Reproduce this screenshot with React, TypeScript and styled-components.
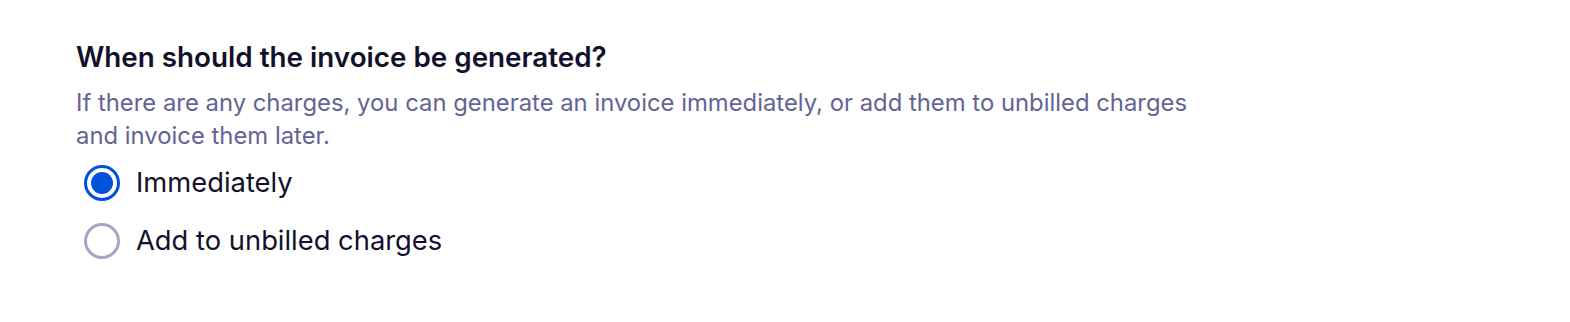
import { useState } from "react";
import styled, { createGlobalStyle } from "styled-components";

const GlobalStyle = createGlobalStyle`
  body {
    margin: 0;
    background: #ffffff;
    font-family: Inter, "Noto Sans", sans-serif;
  }
`;

const Section = styled.section`
  padding: 39px 76px;
`;

const Title = styled.h2`
  margin: 0;
  font-size: 27.8px;
  line-height: 36px;
  font-weight: 600;
  color: #12112b;
`;

const Desc = styled.p`
  margin: 11px 0 0;
  max-width: 1135px;
  font-size: 23.85px;
  line-height: 33px;
  color: #656395;
`;

const Options = styled.div`
  display: flex;
  flex-direction: column;
  gap: 22px;
  margin-top: 13px;
  padding-left: 8px;
`;

const Option = styled.label`
  display: flex;
  align-items: center;
  gap: 16px;
  cursor: pointer;
  font-size: 27.35px;
  line-height: 36px;
  color: #12112b;
`;

const Radio = styled.span<{ $checked: boolean }>`
  box-sizing: border-box;
  width: 36px;
  height: 36px;
  border-radius: 50%;
  border: 3px solid ${(p) => (p.$checked ? "#0052d9" : "#a7a5c6")};
  display: flex;
  align-items: center;
  justify-content: center;
  flex-shrink: 0;

  &::after {
    content: "";
    width: 22px;
    height: 22px;
    border-radius: 50%;
    background: #0052d9;
    display: ${(p) => (p.$checked ? "block" : "none")};
  }
`;

const options = ["Immediately", "Add to unbilled charges"];

export default function App() {
  const [value, setValue] = useState(options[0]);
  return (
    <>
      <GlobalStyle />
      <Section>
        <Title>When should the invoice be generated?</Title>
        <Desc>
          If there are any charges, you can generate an invoice immediately, or
          add them to unbilled charges and invoice them later.
        </Desc>
        <Options>
          {options.map((o) => (
            <Option key={o} onClick={() => setValue(o)}>
              <Radio $checked={value === o} />
              {o}
            </Option>
          ))}
        </Options>
      </Section>
    </>
  );
}
